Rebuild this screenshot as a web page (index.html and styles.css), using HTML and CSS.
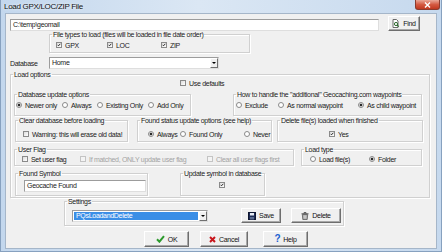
FILE: index.html
```html
<!DOCTYPE html>
<html lang="en">
<head>
  <meta charset="UTF-8">
  <title>Load GPX/LOC/ZIP File</title>
  <link rel="stylesheet" href="styles.css">
</head>
<body>
  <div class="window">
    <div class="titlebar">
      <span class="title">Load GPX/LOC/ZIP File</span>
      <span class="close"><svg width="7" height="6" viewBox="0 0 7 6"><path d="M1 .5l5 5M6 .5l-5 5" stroke="#fff" stroke-width="1.4"/></svg></span>
    </div>
    <div class="client">
      <div class="path-row">
        <div class="textbox path">C:\temp\geomail</div>
        <button class="btn find">
          <svg width="8" height="9" viewBox="0 0 8 9"><path d="M1 .5h3.5l1.5 1.5v6.5H1z" fill="#fff" stroke="#6b6b6b"/><circle cx="4" cy="5" r="1.6" fill="none" stroke="#2f6b2f"/><path d="M5.1 6.1l1.6 1.6" stroke="#2f6b2f" stroke-width="1.2"/></svg>
          Find
        </button>
      </div>

      <fieldset class="group filetypes">
        <legend>File types to load (files will be loaded in file date order)</legend>
        <div class="opts">
          <label class="opt ft1"><span class="cb"><svg viewBox="0 0 6 6"><path d="M1 2.8l1.3 1.4L5 1.2"/></svg></span>GPX</label>
          <label class="opt ft2"><span class="cb"><svg viewBox="0 0 6 6"><path d="M1 2.8l1.3 1.4L5 1.2"/></svg></span>LOC</label>
          <label class="opt"><span class="cb"><svg viewBox="0 0 6 6"><path d="M1 2.8l1.3 1.4L5 1.2"/></svg></span>ZIP</label>
        </div>
      </fieldset>

      <div class="db-row">
        <span class="db-label">Database</span>
        <div class="combo db"><span class="combo-text">Home</span><span class="combo-arrow"></span></div>
      </div>

      <fieldset class="group load">
        <legend>Load options</legend>
        <div class="defaults">
          <label class="opt"><span class="cb"></span>Use defaults</label>
        </div>

        <div class="row r1">
          <fieldset class="group dbupdate">
            <legend>Database update options</legend>
            <div class="opts">
              <label class="opt du1"><span class="rb on"></span>Newer only</label>
              <label class="opt du2"><span class="rb"></span>Always</label>
              <label class="opt du3"><span class="rb"></span>Existing Only</label>
              <label class="opt"><span class="rb"></span>Add Only</label>
            </div>
          </fieldset>
          <fieldset class="group additional">
            <legend>How to handle the "additional" Geocaching.com waypoints</legend>
            <div class="opts">
              <label class="opt ad1"><span class="rb"></span>Exclude</label>
              <label class="opt ad2"><span class="rb"></span>As normal waypoint</label>
              <label class="opt"><span class="rb on"></span>As child waypoint</label>
            </div>
          </fieldset>
        </div>

        <div class="row r2">
          <fieldset class="group cleardb">
            <legend>Clear database before loading</legend>
            <div class="opts">
              <label class="opt"><span class="cb"></span>Warning: this will erase old data!</label>
            </div>
          </fieldset>
          <fieldset class="group found">
            <legend>Found status update options (see help)</legend>
            <div class="opts">
              <label class="opt fs1"><span class="rb on"></span>Always</label>
              <label class="opt fs2"><span class="rb"></span>Found Only</label>
              <label class="opt"><span class="rb"></span>Never</label>
            </div>
          </fieldset>
          <fieldset class="group delete">
            <legend>Delete file(s) loaded when finished</legend>
            <div class="opts">
              <label class="opt"><span class="cb"><svg viewBox="0 0 6 6"><path d="M1 2.8l1.3 1.4L5 1.2"/></svg></span>Yes</label>
            </div>
          </fieldset>
        </div>

        <div class="row r3">
          <fieldset class="group userflag">
            <legend>User Flag</legend>
            <div class="opts">
              <label class="opt uf1"><span class="cb"></span>Set user flag</label>
              <label class="opt uf2 off"><span class="cb"></span>If matched, ONLY update user flag</label>
              <label class="opt off"><span class="cb"></span>Clear all user flags first</label>
            </div>
          </fieldset>
          <fieldset class="group loadtype">
            <legend>Load type</legend>
            <div class="opts">
              <label class="opt lt1"><span class="rb"></span>Load file(s)</label>
              <label class="opt"><span class="rb on"></span>Folder</label>
            </div>
          </fieldset>
        </div>

        <div class="row r4">
          <fieldset class="group symbol">
            <legend>Found Symbol</legend>
            <div class="textbox sym">Geocache Found</div>
          </fieldset>
          <fieldset class="group updsym">
            <legend>Update symbol in database</legend>
            <div class="opts">
              <span class="cb"><svg viewBox="0 0 6 6"><path d="M1 2.8l1.3 1.4L5 1.2"/></svg></span>
            </div>
          </fieldset>
        </div>
      </fieldset>

      <fieldset class="group settings">
        <legend>Settings</legend>
        <div class="settings-row">
          <div class="combo set-combo"><span class="combo-text selected">PQsLoadandDelete</span><span class="combo-arrow"></span></div>
          <button class="btn save">
            <svg width="8" height="8" viewBox="0 0 8 8"><rect x=".5" y=".5" width="7" height="7" fill="#1d2b55" stroke="#0e1630"/><rect x="2" y="1" width="4" height="2.5" fill="#e8edf5"/><rect x="2" y="5" width="4" height="2.5" fill="#5a6b8f"/></svg>
            Save
          </button>
          <button class="btn del">
            <svg width="8" height="8" viewBox="0 0 8 8"><path d="M.5 1.8h7M3 1.8V.6h2v1.2" fill="none" stroke="#555"/><path d="M1.3 2.5h5.4l-.5 5H1.8z" fill="#9a9a9a" stroke="#4f4f4f" stroke-width=".7"/><path d="M3 3.3v3.4M4 3.3v3.4M5 3.3v3.4" stroke="#fff" stroke-width=".5"/></svg>
            Delete
          </button>
        </div>
      </fieldset>

      <div class="actions">
        <button class="btn ok">
          <svg width="9" height="8" viewBox="0 0 9 8"><path d="M1 4.3l2.4 2.4L8 1.2" fill="none" stroke="#2c9a2c" stroke-width="2"/></svg>
          OK
        </button>
        <button class="btn cancel">
          <svg width="7" height="7" viewBox="0 0 7 7"><path d="M1 1l5 5M6 1L1 6" stroke="#c8161d" stroke-width="2"/></svg>
          Cancel
        </button>
        <button class="btn help"><span class="qmark">?</span>Help</button>
      </div>
    </div>
  </div>
</body>
</html>
```

FILE: styles.css
```css
*{
  box-sizing: border-box;
}
body{
  margin: 0;
  width: 442px;
  height: 252px;
  overflow: hidden;
  font-family: "Liberation Sans", Arial, sans-serif;
  font-size: 7px;
  letter-spacing: -0.3px;
  color: #1a1a1a;
  background: #c6d9ee;
}
.window{
  height: 252px;
  display: flex;
  flex-direction: column;
  border: 1px solid #87a1bf;
  border-top: 0;
  background: linear-gradient(to right, #c3d7ed, #dbe7f4 45%, #c6d9ee);
}
.titlebar{
  height: 13px;
  flex: none;
  display: flex;
  align-items: flex-start;
}
.title{
  font-size: 8px;
  line-height: 13px;
  margin-left: 3px;
  color: #111;
  text-shadow: 0 0 3px #fff;
}
.close{
  margin-left: auto;
  margin-right: 1px;
  width: 25px;
  height: 10px;
  display: flex;
  align-items: center;
  justify-content: center;
  background: linear-gradient(#eaa898, #d45a42 50%, #c0381f);
  border: 1px solid #8a3b2e;
  border-top: 0;
  border-radius: 0 0 3px 3px;
}
.client{
  flex: 1;
  margin: 0 4px 2px;
  border: 1px solid #a5b6c9;
  background: #f0f0f0;
}

/* common controls */
.textbox{
  height: 12px;
  line-height: 10px;
  padding-left: 2px;
  background: #fff;
  border: 1px solid;
  border-color: #9c9c9c #dedede #dedede #9c9c9c;
  white-space: nowrap;
}
.btn{
  font: inherit;
  letter-spacing: inherit;
  color: #111;
  display: flex;
  align-items: center;
  justify-content: center;
  gap: 3px;
  padding: 0;
  flex: none;
  background: #f0f0f0;
  border: 1px solid;
  border-color: #fff #6e6e6e #6e6e6e #fff;
  box-shadow: inset -1px -1px #a8a8a8;
}
.combo{
  display: flex;
  height: 12px;
  flex: none;
  background: #fff;
  border: 1px solid;
  border-color: #9c9c9c #dedede #dedede #9c9c9c;
}
.combo-text{
  flex: 1;
  line-height: 10px;
  padding-left: 2px;
}
.combo-arrow{
  width: 8px;
  display: flex;
  align-items: center;
  justify-content: center;
  background: #f0f0f0;
  border: 1px solid;
  border-color: #fff #707070 #707070 #fff;
}
.combo-arrow::before{
  content: "";
  border-left: 2px solid transparent;
  border-right: 2px solid transparent;
  border-top: 2px solid #000;
}
.group{
  margin: 0;
  padding: 0;
  min-width: 0;
  flex: none;
  border: 1px solid #d0d0d0;
  box-shadow: inset 1px 1px #fff, 1px 1px #fff;
}
.group legend{
  margin-left: 2px;
  padding: 0 1px;
  height: 7px;
  line-height: 7px;
  white-space: nowrap;
}
.opts{
  display: flex;
  align-items: center;
  height: 8px;
}
.opt{
  display: flex;
  align-items: center;
  gap: 3px;
  flex: none;
  white-space: nowrap;
}
.opt.off{
  color: #a3a3a3;
}
.cb, .rb{
  width: 6px;
  height: 6px;
  flex: none;
  display: flex;
  background: linear-gradient(135deg, #dcdcdc, #fff);
  border: 1px solid #8a8a8a;
}
.off .cb{
  border-color: #c4c4c4;
  background: #f4f4f4;
}
.cb svg{
  width: 4px;
  height: 4px;
  fill: none;
  stroke: #1c1c1c;
  stroke-width: 1.4;
}
.rb{
  border-radius: 50%;
  background: #fff;
}
.rb.on{
  background: radial-gradient(circle, #2a2a2a 0 1.2px, #fff 1.7px);
}

/* top */
.path-row{
  display: flex;
  align-items: flex-start;
  height: 15px;
  margin-top: 2px;
  padding-left: 4px;
}
.path{
  width: 369px;
  margin-top: 3px;
}
.find{
  width: 32px;
  height: 15px;
  margin-left: 9px;
}
.filetypes{
  width: 201px;
  height: 22px;
  margin-left: 43px;
}
.filetypes .opts{
  margin-top: 3px;
  padding-left: 6px;
}
.ft1{ width: 51px; }
.ft2{ width: 54px; }
.db-row{
  display: flex;
  align-items: center;
  height: 12px;
  margin-top: 4px;
  padding-left: 4px;
}
.db-label{
  width: 39px;
}
.db{
  width: 170px;
}

/* load options */
.load{
  width: 420px;
  height: 127px;
  margin: 2px 0 0 4px;
}
.defaults{
  display: flex;
  align-items: center;
  height: 8px;
  margin-top: 1px;
  padding-left: 169px;
}
.row{
  display: flex;
  align-items: flex-start;
}
.r1{ margin-top: 4px; }
.r2{ margin-top: 1px; }
.r3{ margin-top: 4px; }
.r4{ margin-top: 4px; }

.dbupdate{ width: 177px; height: 25px; margin-left: 3px; }
.dbupdate .opts{ margin-top: 3px; padding-left: 1px; }
.du1{ width: 46px; }
.du2{ width: 35px; }
.du3{ width: 51px; }
.additional{ width: 189px; height: 25px; margin-left: 42px; }
.additional .opts{ margin-top: 3px; padding-left: 2px; }
.ad1{ width: 42px; }
.ad2{ width: 80px; }

.cleardb{ width: 113px; height: 25px; margin-left: 4px; }
.cleardb .opts{ margin-top: 6px; padding-left: 7px; }
.found{ width: 135px; height: 25px; margin-left: 9px; }
.found .opts{ margin-top: 6px; padding-left: 10px; }
.fs1{ width: 32px; }
.fs2{ width: 64px; }
.delete{ width: 146px; height: 25px; margin-left: 5px; }
.delete .opts{ margin-top: 6px; padding-left: 51px; }

.userflag{ width: 280px; height: 20px; margin-left: 3px; }
.userflag .opts{ margin-top: 2px; padding-left: 7px; }
.uf1{ width: 58px; }
.uf2{ width: 127px; }
.loadtype{ width: 121px; height: 20px; margin-left: 7px; }
.loadtype .opts{ margin-top: 2px; padding-left: 8px; }
.lt1{ width: 59px; }

.symbol{ width: 133px; height: 26px; margin-left: 4px; }
.sym{ width: 122px; margin: 3px 0 0 8px; }
.updsym{ width: 85px; height: 26px; margin-left: 32px; }
.updsym .opts{ margin-top: 4px; padding-left: 38px; }

/* settings and buttons */
.settings{
  width: 280px;
  height: 28px;
  margin-left: 58px;
}
.settings-row{
  display: flex;
  align-items: center;
  height: 15px;
  margin-top: 3px;
  padding-left: 7px;
}
.set-combo{
  width: 136px;
}
.selected{
  background: #3a8ee6;
  color: #fff;
  margin: 1px;
  line-height: 8px;
}
.save{
  width: 40px;
  height: 15px;
  margin-left: 33px;
}
.del{
  width: 50px;
  height: 15px;
  margin-left: 10px;
}
.actions{
  display: flex;
  margin-top: 5px;
  padding-left: 138px;
}
.ok{
  width: 45px;
  height: 16px;
}
.cancel{
  width: 48px;
  height: 16px;
  margin-left: 11px;
}
.help{
  width: 45px;
  height: 16px;
  margin-left: 15px;
}
.qmark{
  color: #1b5fd0;
  font-weight: bold;
  font-size: 10px;
  line-height: 10px;
}
```
